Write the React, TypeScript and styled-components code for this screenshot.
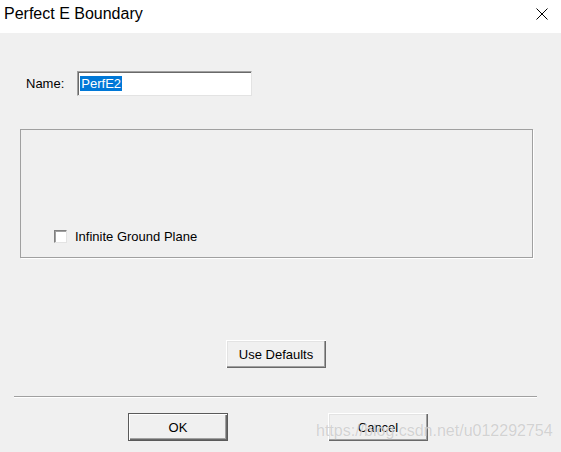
import React from "react";
import styled, { createGlobalStyle, css } from "styled-components";

const Global = createGlobalStyle`
  html, body { margin: 0; padding: 0; }
  body {
    background: #f0f0f0;
    font-family: "Liberation Sans", Arial, sans-serif;
    color: #000;
  }
`;

const Window = styled.div`
  position: relative;
  width: 561px;
  height: 452px;
  background: #f0f0f0;
  overflow: hidden;
  display: flex;
  flex-direction: column;
`;

const TitleBar = styled.div`
  height: 33px;
  background: #ffffff;
  display: flex;
  align-items: flex-start;
  justify-content: space-between;
  padding: 5px 13px 0 4px;
  box-sizing: border-box;
  flex: none;
`;

const Title = styled.div`
  font-size: 16px;
  line-height: 18px;
`;

const CloseIcon = styled.svg`
  width: 12px;
  height: 12px;
  margin-top: 3px;
`;

const Body = styled.div`
  display: flex;
  flex-direction: column;
  align-items: flex-start;
  font-size: 13px;
`;

const NameRow = styled.div`
  display: flex;
  align-items: center;
  margin-top: 38px;
  padding-left: 26px;
  gap: 13px;
`;

const Label = styled.span`
  font-size: 13px;
  line-height: 15px;
`;

const TextField = styled.div`
  box-sizing: border-box;
  width: 175px;
  height: 25px;
  background: #fff;
  border-top: 1px solid #a0a0a0;
  border-left: 1px solid #a0a0a0;
  border-right: 1px solid #e3e3e3;
  border-bottom: 1px solid #e3e3e3;
  box-shadow: inset 1px 1px 0 #696969;
  display: flex;
  align-items: center;
  padding-left: 2px;
`;

const Selected = styled.span`
  background: #0078d7;
  color: #fff;
  font-size: 13px;
  line-height: 15px;
  padding: 0 1px;
`;

const GroupBox = styled.div`
  box-sizing: border-box;
  margin-top: 33px;
  margin-left: 20px;
  width: 513px;
  height: 129px;
  border: 1px solid #a0a0a0;
  box-shadow: 1px 1px 0 #ffffff;
  display: flex;
  flex-direction: column;
  justify-content: flex-end;
  padding: 0 0 13px 33px;
`;

const CheckRow = styled.label`
  display: flex;
  align-items: center;
  gap: 8px;
`;

const CheckBox = styled.span`
  box-sizing: border-box;
  width: 13px;
  height: 13px;
  background: #fff;
  border-top: 1px solid #808080;
  border-left: 1px solid #808080;
  border-right: 1px solid #e3e3e3;
  border-bottom: 1px solid #e3e3e3;
  box-shadow: inset 1px 1px 0 #a0a0a0;
`;

const Button = styled.button<{ $default?: boolean }>`
  box-sizing: border-box;
  width: 100px;
  height: 28px;
  padding: 0;
  background: #f0f0f0;
  font-family: "Liberation Sans", Arial, sans-serif;
  font-size: 13px;
  color: #000;
  border: none;
  ${(p) =>
    p.$default
      ? css`
          border: 1px solid #5a5a5a;
          box-shadow: inset 1px 1px 0 #ffffff, inset -1px -1px 0 #696969,
            inset -2px -2px 0 #a0a0a0;
        `
      : css`
          box-shadow: inset 1px 1px 0 #ffffff, inset -1px -1px 0 #696969,
            inset -2px -2px 0 #a0a0a0, inset 2px 2px 0 #e3e3e3;
        `}
`;

const DefaultsButton = styled(Button)`
  margin-top: 82px;
  margin-left: 226px;
`;

const Separator = styled.div`
  margin-top: 28px;
  margin-left: 14px;
  width: 523px;
  height: 1px;
  background: #a0a0a0;
  box-shadow: 0 1px 0 #ffffff;
`;

const ButtonRow = styled.div`
  display: flex;
  margin-top: 16px;
  padding-left: 128px;
  gap: 100px;
`;

const Watermark = styled.div`
  position: absolute;
  left: 316px;
  top: 421px;
  font-family: "Liberation Sans", Arial, sans-serif;
  font-size: 16px;
  line-height: 20px;
  color: rgba(175, 175, 175, 0.55);
  text-shadow: 0 0 1px rgba(255, 255, 255, 0.9);
  pointer-events: none;
  white-space: nowrap;
`;

export default function App() {
  return (
    <>
      <Global />
      <Window>
        <TitleBar>
          <Title>Perfect E Boundary</Title>
          <CloseIcon viewBox="0 0 12 12">
            <path d="M0.5 0.5 L11.5 11.5 M11.5 0.5 L0.5 11.5" stroke="#000" strokeWidth="1" fill="none" />
          </CloseIcon>
        </TitleBar>
        <Body>
          <NameRow>
            <Label>Name:</Label>
            <TextField>
              <Selected>PerfE2</Selected>
            </TextField>
          </NameRow>
          <GroupBox>
            <CheckRow>
              <CheckBox />
              <Label>Infinite Ground Plane</Label>
            </CheckRow>
          </GroupBox>
          <DefaultsButton>Use Defaults</DefaultsButton>
          <Separator />
          <ButtonRow>
            <Button $default>OK</Button>
            <Button>Cancel</Button>
          </ButtonRow>
        </Body>
        <Watermark>https://blog.csdn.net/u012292754</Watermark>
      </Window>
    </>
  );
}
